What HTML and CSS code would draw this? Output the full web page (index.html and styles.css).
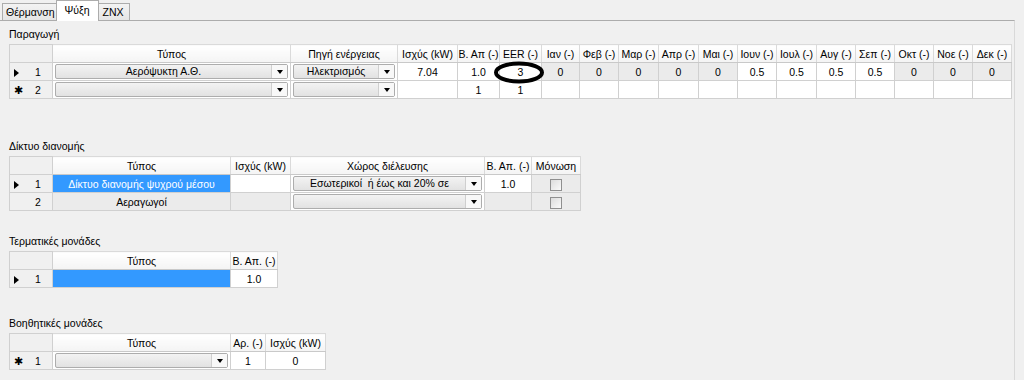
FILE: index.html
```html
<!DOCTYPE html>
<html lang="el">
<head>
<meta charset="UTF-8" />
<title>Ψύξη</title>
<link rel="stylesheet" href="styles.css">
</head>
<body>
  <div class="tabs">
    <div class="tab">Θέρμανση</div>
    <div class="tab active">Ψύξη</div>
    <div class="tab">ZNX</div>
  </div>
  <div class="panel">

    <!-- Παραγωγή -->
    <section class="group g-prod">
      <div class="caption">Παραγωγή</div>
      <table class="grid" style="width:1003px">
        <colgroup>
          <col style="width:43px"><col style="width:238px"><col style="width:107px"><col style="width:60px">
          <col style="width:42px"><col style="width:42px">
          <col style="width:38px"><col style="width:39px"><col style="width:40px"><col style="width:40px">
          <col style="width:39px"><col style="width:39px"><col style="width:40px"><col style="width:39px">
          <col style="width:39px"><col style="width:39px"><col style="width:39px"><col style="width:39px">
        </colgroup>
        <thead>
          <tr>
            <th class="rh"></th><th>Τύπος</th><th>Πηγή ενέργειας</th><th>Ισχύς (kW)</th>
            <th>Β. Απ (-)</th><th>EER (-)</th>
            <th>Ιαν (-)</th><th>Φεβ (-)</th><th>Μαρ (-)</th><th>Απρ (-)</th><th>Μαι (-)</th><th>Ιουν (-)</th>
            <th>Ιουλ (-)</th><th>Αυγ (-)</th><th>Σεπ (-)</th><th>Οκτ (-)</th><th>Νοε (-)</th><th>Δεκ (-)</th>
          </tr>
        </thead>
        <tbody>
          <tr>
            <td class="rh"><span class="cur"></span>1</td>
            <td class="cc"><div class="combo"><span class="combo-text">Αερόψυκτη Α.Θ.</span><span class="combo-btn"><i></i></span></div></td>
            <td class="cc"><div class="combo"><span class="combo-text">Ηλεκτρισμός</span><span class="combo-btn"><i></i></span></div></td>
            <td>7.04</td><td>1.0</td>
            <td class="marked">3<svg class="ring" width="52" height="23" viewBox="0 0 52 23"><ellipse cx="26" cy="11.5" rx="23" ry="9" fill="none" stroke="#000" stroke-width="4"/></svg></td>
            <td class="ro">0</td><td class="ro">0</td><td class="ro">0</td><td class="ro">0</td><td class="ro">0</td>
            <td>0.5</td><td>0.5</td><td>0.5</td><td>0.5</td>
            <td class="ro">0</td><td class="ro">0</td><td class="ro">0</td>
          </tr>
          <tr>
            <td class="rh"><span class="star">✱</span>2</td>
            <td class="cc"><div class="combo"><span class="combo-text"></span><span class="combo-btn"><i></i></span></div></td>
            <td class="cc"><div class="combo"><span class="combo-text"></span><span class="combo-btn"><i></i></span></div></td>
            <td></td><td>1</td><td>1</td>
            <td></td><td></td><td></td><td></td><td></td><td></td><td></td><td></td><td></td><td></td><td></td><td></td>
          </tr>
        </tbody>
      </table>
    </section>

    <!-- Δίκτυο διανομής -->
    <section class="group g-net">
      <div class="caption">Δίκτυο διανομής</div>
      <table class="grid" style="width:571px">
        <colgroup>
          <col style="width:43px"><col style="width:178px"><col style="width:60px">
          <col style="width:194px"><col style="width:47px"><col style="width:49px">
        </colgroup>
        <thead>
          <tr><th class="rh"></th><th>Τύπος</th><th>Ισχύς (kW)</th><th>Χώρος διέλευσης</th><th>Β. Απ. (-)</th><th>Μόνωση</th></tr>
        </thead>
        <tbody>
          <tr>
            <td class="rh"><span class="cur"></span>1</td>
            <td class="sel">Δίκτυο διανομής ψυχρού μέσου</td>
            <td></td>
            <td class="cc"><div class="combo"><span class="combo-text">Εσωτερικοί &nbsp;ή έως και 20% σε</span><span class="combo-btn"><i></i></span></div></td>
            <td>1.0</td>
            <td class="ro"><span class="check"></span></td>
          </tr>
          <tr>
            <td class="rh"><span class="blank"></span>2</td>
            <td class="ro">Αεραγωγοί</td>
            <td class="ro"></td>
            <td class="cc"><div class="combo"><span class="combo-text"></span><span class="combo-btn"><i></i></span></div></td>
            <td class="ro"></td>
            <td class="ro"><span class="check"></span></td>
          </tr>
        </tbody>
      </table>
    </section>

    <!-- Τερματικές μονάδες -->
    <section class="group g-term">
      <div class="caption">Τερματικές μονάδες</div>
      <table class="grid" style="width:268px">
        <colgroup><col style="width:43px"><col style="width:178px"><col style="width:47px"></colgroup>
        <thead><tr><th class="rh"></th><th>Τύπος</th><th>Β. Απ. (-)</th></tr></thead>
        <tbody>
          <tr><td class="rh"><span class="cur"></span>1</td><td class="sel"></td><td>1.0</td></tr>
        </tbody>
      </table>
    </section>

    <!-- Βοηθητικές μονάδες -->
    <section class="group g-aux">
      <div class="caption">Βοηθητικές μονάδες</div>
      <table class="grid" style="width:316px">
        <colgroup><col style="width:43px"><col style="width:178px"><col style="width:35px"><col style="width:60px"></colgroup>
        <thead><tr><th class="rh"></th><th>Τύπος</th><th>Αρ. (-)</th><th>Ισχύς (kW)</th></tr></thead>
        <tbody>
          <tr>
            <td class="rh"><span class="star">✱</span>1</td>
            <td class="cc"><div class="combo"><span class="combo-text"></span><span class="combo-btn"><i></i></span></div></td>
            <td>1</td><td>0</td>
          </tr>
        </tbody>
      </table>
    </section>

  </div>
</body>
</html>
```

FILE: styles.css
```css
body {
  margin: 0;
  font-family: 'Liberation Sans', Arial, sans-serif;
  font-size: 10.5px;
  color: #000;
  background: #f0f0f0;
  width: 1024px;
  height: 380px;
  overflow: hidden;
}
.tabs {
  display: flex;
  align-items: flex-end;
  height: 20px;
  padding-left: 2px;
}
.tab {
  height: 17px;
  line-height: 16px;
  padding: 0 3px;
  border: 1px solid #acacac;
  border-bottom: none;
  background: linear-gradient(#f3f3f3, #e5e5e5);
  box-sizing: border-box;
  margin-right: -1px;
}
.tab.active {
  height: 21px;
  line-height: 18px;
  padding: 0 8px;
  background: #fff;
  position: relative;
  z-index: 1;
  margin-bottom: -1px;
  margin-left: -2px;
  margin-right: -2px;
}
.tab:last-child {
  padding: 0 5px;
}
.panel {
  border-top: 1px solid #acacac;
  border-right: 1px solid #d9d9d9;
  width: 1015px;
  height: 360px;
  box-sizing: border-box;
  background: #f0f0f0;
}
.group {
  padding-left: 9px;
}
.caption {
  height: 13px;
  line-height: 13px;
  margin-bottom: 3px;
}
.g-prod { padding-top: 7px; }
.g-net { padding-top: 41px; }
.g-term { padding-top: 24px; }
.g-aux { padding-top: 29px; }

.grid {
  border-collapse: collapse;
  table-layout: fixed;
}
.grid tr {
  height: 18px;
}
.grid th,
.grid td {
  padding: 0;
  line-height: 14px;
  border: 1px solid #d0d0d0;
  text-align: center;
  white-space: nowrap;
  overflow: hidden;
  font-weight: normal;
  background: #fff;
}
.grid th {
  background: linear-gradient(#ffffff, #f4f4f4);
  border-color: #dadada;
  border-bottom-color: #c9c9c9;
}
.grid .rh {
  background: #f0f0f0;
  text-align: left;
  padding-left: 4px;
  border-color: #d0d0d0;
}
.grid th.rh {
  background: #f0f0f0;
}
.grid td.ro {
  background: #ebebeb;
}
.grid td.sel {
  background: #3399ff;
  color: #fff;
}
.cur,
.star,
.blank {
  display: inline-block;
  width: 21px;
  height: 14px;
  line-height: 14px;
  vertical-align: top;
}
.cur::before {
  content: "";
  display: inline-block;
  border-left: 5px solid #000;
  border-top: 4px solid transparent;
  border-bottom: 4px solid transparent;
  vertical-align: -1px;
}
.star {
  font-size: 11px;
}
.grid td.cc {
  padding: 1px 2px;
}
.combo {
  display: flex;
  height: 15px;
  border: 1px solid #adadad;
  border-radius: 2px;
  box-sizing: border-box;
  background: linear-gradient(#f3f3f3, #e2e2e2);
}
.combo-text {
  flex: 1;
  line-height: 13px;
  text-align: center;
  overflow: hidden;
}
.combo-btn {
  width: 15px;
  display: flex;
  align-items: center;
  justify-content: center;
  background: #f8f8f8;
  border-left: 1px solid #cfcfcf;
}
.combo-btn i {
  display: block;
  border-top: 4px solid #000;
  border-left: 3px solid transparent;
  border-right: 3px solid transparent;
}
.marked {
  position: relative;
  overflow: visible !important;
}
.ring {
  position: absolute;
  left: -7px;
  top: -2px;
}
.check {
  display: inline-block;
  width: 12px;
  height: 12px;
  box-sizing: border-box;
  border: 1px solid #8f8f8f;
  background: linear-gradient(135deg, #dcdcdc, #fafafa);
  vertical-align: middle;
}
```
